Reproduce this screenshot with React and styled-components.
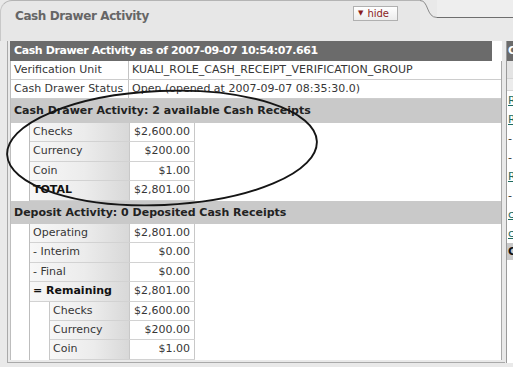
import React from 'react';
import styled, { createGlobalStyle } from 'styled-components';

const Global = createGlobalStyle`
  html, body { margin: 0; padding: 0; background: #e9e9e9; }
  body { font-family: "DejaVu Sans", Verdana, sans-serif; }
`;

const Page = styled.div`
  position: relative;
  width: 513px;
  height: 367px;
  overflow: hidden;
  background: #e9e9e9;
`;

const TabHead = styled.div`
  display: flex;
  align-items: flex-start;
  height: 41px;
`;

const TabBody = styled.div`
  flex: 0 0 420px;
  height: 41px;
  box-sizing: border-box;
  border-top: 1px solid #b4b4b4;
  border-left: 1px solid #c8c8c8;
  border-top-left-radius: 12px;
  display: flex;
  align-items: flex-start;
  justify-content: space-between;
  padding: 5px 22px 0 14px;
  background: #e7e7e7;
`;

const Title = styled.div`
  font-size: 12px;
  font-weight: bold;
  color: #666;
  line-height: 20px;
  letter-spacing: -0.4px;
`;

const HideButton = styled.button`
  width: 45px;
  height: 15px;
  box-sizing: border-box;
  padding: 0 0 0 4px;
  border: 1px solid #b0b0b0;
  background: linear-gradient(#ffffff, #ececec);
  color: #8a1c1c;
  font-family: "DejaVu Sans", Verdana, sans-serif;
  font-size: 10px;
  line-height: 13px;
  display: flex;
  align-items: center;
  gap: 4px;
`;

const Caret = styled.span`
  font-size: 7px;
`;

const TabCurve = styled.svg`
  flex: 0 0 17px;
  display: block;
`;

const TabRest = styled.div`
  flex: 1;
  height: 18px;
  box-sizing: border-box;
  border-bottom: 1px solid #6e6e6e;
  background: #eeeeee;
`;

const Main = styled.div`
  display: flex;
  align-items: flex-start;
`;

const LeftWrap = styled.div`
  margin-left: 7px;
  flex: 0 0 498px;
  box-sizing: border-box;
  height: 322px;
  border-left: 1px solid #a9a9a9;
  border-bottom: 1px solid #a9a9a9;
  padding: 0 3px 4px 2px;
`;

const Sheet = styled.div`
  width: 492px;
  background: #fff;
  color: #363636;
  font-size: 11px;
`;

const Caption = styled.div`
  width: 482px;
  height: 20px;
  box-sizing: border-box;
  background: #6b6b6b;
  color: #fff;
  font-weight: bold;
  font-size: 11px;
  letter-spacing: -0.4px;
  line-height: 20px;
  padding-left: 4px;
  white-space: nowrap;
`;

const Body = styled.div`
  border-left: 1px solid #bdbdbd;
  border-right: 1px solid #a8a8a8;
`;

const InfoRow = styled.div`
  display: grid;
  grid-template-columns: 118px 1fr;
  height: 19px;
  box-sizing: border-box;
  border-bottom: 1px solid #cdcdcd;
  line-height: 18px;
`;

const InfoLabel = styled.div`
  border-right: 1px solid #c4c4c4;
  padding-left: 3px;
  white-space: nowrap;
`;

const InfoValue = styled.div`
  padding-left: 3px;
  white-space: nowrap;
`;

const SectionBar = styled.div`
  height: ${p => p.$h}px;
  box-sizing: border-box;
  background: #c9c9c9;
  color: #222;
  font-weight: bold;
  line-height: ${p => p.$h}px;
  padding-left: 3px;
  white-space: nowrap;
`;

const Block = styled.div`
  padding-left: 18px;
`;

const Grid = styled.div`
  width: ${p => p.$w}px;
  border-left: 1px solid #bdbdbd;
`;

const Line = styled.div`
  display: grid;
  grid-template-columns: ${p => p.$label}px 65px;
  height: 19.45px;
  box-sizing: border-box;
  border-bottom: 1px solid #d2d2d2;
  line-height: 18px;
`;

const LabelCell = styled.div`
  padding-left: 3px;
  border-right: 1px solid #c8c8c8;
  background: linear-gradient(to right, #f7f7f7 0%, #ececec 55%, #d8d8d8 100%);
  font-weight: ${p => (p.$bold ? 'bold' : 'normal')};
  color: ${p => (p.$bold ? '#111' : '#363636')};
  white-space: nowrap;
`;

const ValueCell = styled.div`
  text-align: right;
  padding-right: 4px;
  border-right: 1px solid #c8c8c8;
  white-space: nowrap;
`;

const Nested = styled.div`
  display: flex;
`;

const Spacer = styled.div`
  width: 19px;
  border-right: 1px solid #c8c8c8;
`;

const RightPanel = styled.div`
  flex: 0 0 200px;
  margin-left: 1px;
  height: 322px;
  box-sizing: border-box;
  background: #fff;
  border-left: 1px solid #9a9a9a;
  font-size: 11px;
`;

const RHeader = styled.div`
  height: 20px;
  background: #6b6b6b;
  color: #fff;
  font-weight: bold;
  line-height: 20px;
  padding-left: 1px;
`;

const RShade = styled.div`
  height: ${p => p.$h}px;
  background: ${p => p.$bg};
  border-bottom: 1px solid #d4d4d4;
`;

const RItem = styled.div`
  height: 19px;
  line-height: 19px;
  padding-left: 1px;
  color: #333;
  white-space: nowrap;
`;

const RLink = styled.span`
  color: #1d6a5e;
  text-decoration: underline;
`;

const RBar = styled.div`
  height: 17px;
  line-height: 17px;
  background: #c9c9c9;
  font-weight: bold;
  padding-left: 1px;
  color: #111;
`;

const Overlay = styled.svg`
  position: absolute;
  left: 0;
  top: 0;
  pointer-events: none;
`;

const cashRows = [
  ['Checks', '$2,600.00'],
  ['Currency', '$200.00'],
  ['Coin', '$1.00'],
  ['TOTAL', '$2,801.00', true],
];

const depositRows = [
  ['Operating', '$2,801.00'],
  ['- Interim', '$0.00'],
  ['- Final', '$0.00'],
  ['= Remaining', '$2,801.00', true],
];

const remainingRows = [
  ['Checks', '$2,600.00'],
  ['Currency', '$200.00'],
  ['Coin', '$1.00'],
];

const Rows = ({ rows, label }) =>
  rows.map(([l, v, b]) => (
    <Line key={l} $label={label}>
      <LabelCell $bold={b}>{l}</LabelCell>
      <ValueCell>{v}</ValueCell>
    </Line>
  ));

export default function App() {
  return (
    <Page>
      <Global />
      <TabHead>
        <TabBody>
          <Title>Cash Drawer Activity</Title>
          <HideButton>
            <Caret>▼</Caret>hide
          </HideButton>
        </TabBody>
        <TabCurve width="17" height="18" viewBox="0 0 17 18">
          <path d="M0 0.5 C 9 0.5, 6 17.5, 17 17.5" fill="none" stroke="#8a8a8a" strokeWidth="1" />
        </TabCurve>
        <TabRest />
      </TabHead>
      <Main>
        <LeftWrap>
          <Sheet>
            <Caption>Cash Drawer Activity as of 2007-09-07 10:54:07.661</Caption>
            <Body>
              <InfoRow>
                <InfoLabel>Verification Unit</InfoLabel>
                <InfoValue>KUALI_ROLE_CASH_RECEIPT_VERIFICATION_GROUP</InfoValue>
              </InfoRow>
              <InfoRow>
                <InfoLabel>Cash Drawer Status</InfoLabel>
                <InfoValue>Open (opened at 2007-09-07 08:35:30.0)</InfoValue>
              </InfoRow>
              <SectionBar $h={24}>Cash Drawer Activity: 2 available Cash Receipts</SectionBar>
              <Block>
                <Grid $w={165}>
                  <Rows rows={cashRows} label={100} />
                </Grid>
              </Block>
              <SectionBar $h={23}>Deposit Activity: 0 Deposited Cash Receipts</SectionBar>
              <Block>
                <Grid $w={165}>
                  <Rows rows={depositRows} label={100} />
                  <Nested>
                    <Spacer />
                    <div>
                      <Rows rows={remainingRows} label={80} />
                    </div>
                  </Nested>
                </Grid>
              </Block>
            </Body>
          </Sheet>
        </LeftWrap>
        <RightPanel>
          <RHeader>Cash</RHeader>
          <RShade $h={17} $bg="#e4e4e4" />
          <RShade $h={11} $bg="#ececec" />
          <RItem><RLink>Receipts</RLink></RItem>
          <RItem><RLink>Reports</RLink></RItem>
          <RItem>- Interim</RItem>
          <RItem>- Final</RItem>
          <RItem><RLink>Receipts</RLink></RItem>
          <RItem>- Final</RItem>
          <RItem><RLink>cash</RLink></RItem>
          <RItem><RLink>cash</RLink></RItem>
          <RBar>Cash</RBar>
        </RightPanel>
      </Main>
      <Overlay width="513" height="367" viewBox="0 0 513 367">
        <ellipse
          cx="162"
          cy="148"
          rx="155"
          ry="57"
          transform="rotate(-2.5 162 148)"
          fill="none"
          stroke="#151515"
          strokeWidth="1.9"
        />
      </Overlay>
    </Page>
  );
}
